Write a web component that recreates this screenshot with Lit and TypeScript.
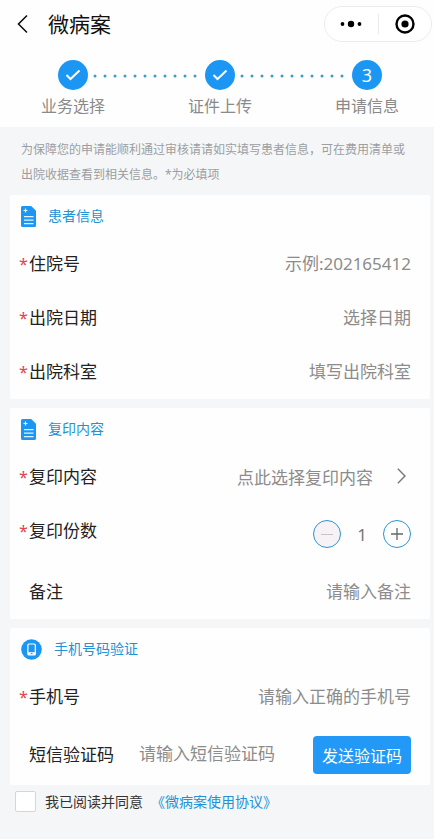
import { LitElement, html, css, nothing } from "lit";
import { customElement, property, state } from "lit/decorators.js";

const FONT = css`"Noto Sans", "Noto Sans CJK SC", sans-serif`;

const documentIcon = html`<svg width="15" height="21" viewBox="0 0 15 21" aria-hidden="true">
  <path d="M1.5 0H10.2L15 4.8V19.5a1.5 1.5 0 0 1-1.5 1.5H1.5A1.5 1.5 0 0 1 0 19.500V1.500A1.500 1.500 0 0 1 1.500 0Z" fill="#1b97f3" />
  <path d="M4.500 2.500v4M2.500 4.500h4M3 10.700h9.500M3 14.200h9.500M3 17.700h9.500" stroke="#e4f3ff" stroke-width="1.200" />
</svg>`;

const phoneIcon = html`<svg width="21" height="21" viewBox="0 0 21 21" aria-hidden="true">
  <circle cx="10.5" cy="10.5" r="10.3" fill="#1b97f3" />
  <rect x="6.900" y="5" width="7.400" height="11" rx="1" fill="none" stroke="#fff" stroke-width="1.200" />
  <path d="M7 13.200h7.200v2.600H7z" fill="#fff" />
  <path d="M9.700 14.600h1.800" stroke="#1b97f3" />
</svg>`;

@customElement("form-card")
class FormCard extends LitElement {
  @property() heading = "";
  @property() icon = "document";

  static styles = css`
    :host { display: block; background: #fefefe; border-radius: 2px; padding: 0 19px 0 9px; }
    .heading {
      display: flex; align-items: center; gap: 12px; height: 42px; margin: 0; padding-left: 2px;
      font: 400 14px/20px ${FONT}; color: #2292d6;
    }
  `;

  render() {
    return html`<section>
      <h2 class="heading">${this.icon === "phone" ? phoneIcon : documentIcon}<span>${this.heading}</span></h2>
      <slot></slot>
    </section>`;
  }
}

@customElement("step-bar")
class StepBar extends LitElement {
  static styles = css`
    :host { display: block; padding: 13px 31px 0 37px; font-family: ${FONT}; }
    .steps { display: flex; list-style: none; margin: 0; padding: 0; }
    .step { display: flex; flex-direction: column; align-items: center; gap: 4px; width: 72px; flex: none; }
    .mark {
      display: grid; place-items: center; width: 30px; height: 30px; border-radius: 50%;
      background: #1b97f3; color: #fff; font-size: 18px; line-height: 30px;
    }
    .label { font-size: 16px; line-height: 24px; color: #8a8a8a; white-space: nowrap; }
    .dots { flex: 1; height: 30px; margin: 0 -16px; min-width: 0; }
  `;

  private dots = html`<li class="dots" aria-hidden="true">
    <svg width="100%" height="30"><line x1="2" y1="16" x2="100%" y2="16" stroke="#3c9ccf" stroke-width="3" stroke-linecap="round" stroke-dasharray="0 10" /></svg>
  </li>`;

  render() {
    const steps = ["业务选择", "证件上传", "申请信息"];
    return html`<ol class="steps">
      ${steps.map((label, i) => html`
        ${i ? this.dots : nothing}
        <li class="step">
          <span class="mark">${i < 2
            ? html`<svg width="16" height="12" viewBox="0 0 16 12" aria-hidden="true"><path d="M1.500 6 5.500 10 14.500 1.500" fill="none" stroke="#fff" stroke-width="2" /></svg>`
            : i + 1}</span>
          <span class="label">${label}</span>
        </li>`)}
    </ol>`;
  }
}

@customElement("app-root")
class AppRoot extends LitElement {
  @state() private copies = 1;

  static styles = css`
    :host { display: block; min-height: 100vh; background: #f5f6f8; color: #222; font-family: ${FONT}; }
    * { box-sizing: border-box; }
    button, input { font: inherit; color: inherit; }
    button { border: 0; padding: 0; background: none; cursor: pointer; }
    .top { background: #fefefe; height: 127px; }
    .nav { display: flex; align-items: center; height: 47px; padding: 0 2px 0 16px; }
    .back { display: grid; place-items: center start; width: 32px; height: 32px; }
    .title { flex: 1; margin: 0; font-size: 21px; line-height: 30px; font-weight: 400; color: #111; }
    .capsule { display: flex; align-items: center; width: 108px; height: 36px; border: 1px solid #ececec; border-radius: 18px; background: #fff; }
    .capsule button { flex: 1; display: grid; place-items: center; height: 34px; }
    .divider { width: 1px; height: 20px; background: #eaeaea; }
    .notice { margin: 0; padding: 10px 19px 8px 21px; font-size: 12px; line-height: 25px; color: #9c9ea1; }
    .cards { display: grid; gap: 9px; padding: 0 4px 0 10px; }
    .row { display: flex; align-items: center; height: 54px; font-size: 17px; }
    .tall { height: 61px; }
    .top-label { align-items: flex-start; }
    .label { display: flex; flex: none; line-height: 54px; color: #222; white-space: nowrap; }
    .star { width: 10px; font-size: 16px; color: #e0454c; }
    .field { flex: 1; min-width: 0; width: 0; height: 40px; border: 0; padding: 0 0 2px; background: none; outline: 0; text-align: right; }
    .field::placeholder { color: #8c8c8c; opacity: 1; }
    .code { text-align: left; margin-left: 25px; }
    .pick { display: flex; align-items: center; gap: 24px; margin-left: auto; padding: 0 5px 2px 0; color: #8c8c8c; height: 40px; }
    .stepper { display: flex; align-items: center; margin-left: auto; height: 60px; }
    .round { display: grid; place-items: center; width: 28px; height: 28px; border: 1px solid #2b94d4; border-radius: 50%; }
    .round:disabled { background: #f6f2f6; }
    .count { width: 42px; text-align: center; color: #777; }
    .send { width: 98px; height: 38px; border-radius: 4px; background: #2299f7; color: #fff; font-size: 16px; white-space: nowrap; }
    .agree { display: flex; align-items: center; padding: 6px 15px 26px; font-size: 14px; line-height: 20px; color: #333; }
    .agree label { display: flex; align-items: center; gap: 9px; }
    .check { appearance: none; width: 21px; height: 21px; margin: 0; border: 1px solid #d5d6d8; border-radius: 2px; background: #fff; }
    .check:checked { background: #1b97f3; }
    .link { margin-left: 8px; color: #2292d6; text-decoration: none; }
  `;

  private label(id: string, text: string, required = true) {
    return html`<label class="label" for=${id}><span class="star">${required ? "*" : ""}</span>${text}</label>`;
  }

  private row(id: string, text: string, hint: string, required = true, type = "text") {
    return html`<div class="row">
      ${this.label(id, text, required)}
      <input class="field" id=${id} type=${type} placeholder=${hint} />
    </div>`;
  }

  render() {
    return html`
      <header class="top">
        <div class="nav">
          <button class="back" aria-label="返回"><svg width="12" height="20" viewBox="0 0 12 20"><path d="M11 1.500 2.500 10 11 18.500" fill="none" stroke="#111" stroke-width="1.600" /></svg></button>
          <h1 class="title">微病案</h1>
          <div class="capsule">
            <button aria-label="更多"><svg width="22" height="8" viewBox="0 0 22 8"><circle cx="2.500" cy="4" r="1.900" /><circle cx="11" cy="4" r="3.200" /><circle cx="19.500" cy="4" r="1.900" /></svg></button>
            <span class="divider"></span>
            <button aria-label="关闭"><svg width="20" height="20" viewBox="0 0 20 20"><circle cx="10" cy="10" r="8.500" fill="none" stroke="#000" stroke-width="2.400" /><circle cx="10" cy="10" r="3.600" /></svg></button>
          </div>
        </div>
        <step-bar></step-bar>
      </header>
      <p class="notice">为保障您的申请能顺利通过审核请请如实填写患者信息，可在费用清单或出院收据查看到相关信息。*为必填项</p>
      <main class="cards">
        <form-card heading="患者信息">
          ${this.row("admission", "住院号", "示例:202165412")}
          ${this.row("date", "出院日期", "选择日期")}
          ${this.row("dept", "出院科室", "填写出院科室")}
        </form-card>
        <form-card heading="复印内容">
          <div class="row">
            ${this.label("content", "复印内容")}
            <button class="pick" id="content">点此选择复印内容<svg width="9" height="16" viewBox="0 0 9 16"><path d="M.8.8 8 8 .8 15.200" fill="none" stroke="#777" stroke-width="1.400" /></svg></button>
          </div>
          <div class="row tall top-label">
            ${this.label("copies", "复印份数")}
            <div class="stepper">
              <button class="round" aria-label="减少" ?disabled=${this.copies <= 1} @click=${() => this.copies--}><svg width="12" height="12"><path d="M0 6.500h12" stroke="#c9c2c8" /></svg></button>
              <output class="count" id="copies">${this.copies}</output>
              <button class="round" aria-label="增加" @click=${() => this.copies++}><svg width="12" height="12" viewBox="0 0 12 12"><path d="M0 6h12M6 0v12" stroke="#666" stroke-width="1.300" /></svg></button>
            </div>
          </div>
          ${this.row("remark", "备注", "请输入备注", false)}
        </form-card>
        <form-card heading="手机号码验证" icon="phone">
          ${this.row("phone", "手机号", "请输入正确的手机号", true, "tel")}
          <div class="row tall">
            ${this.label("code", "短信验证码", false)}
            <input class="field code" id="code" placeholder="请输入短信验证码" />
            <button class="send">发送验证码</button>
          </div>
        </form-card>
      </main>
      <footer class="agree">
        <label><input class="check" type="checkbox" />我已阅读并同意</label>
        <a class="link" href="#agreement">《微病案使用协议》</a>
      </footer>`;
  }
}
